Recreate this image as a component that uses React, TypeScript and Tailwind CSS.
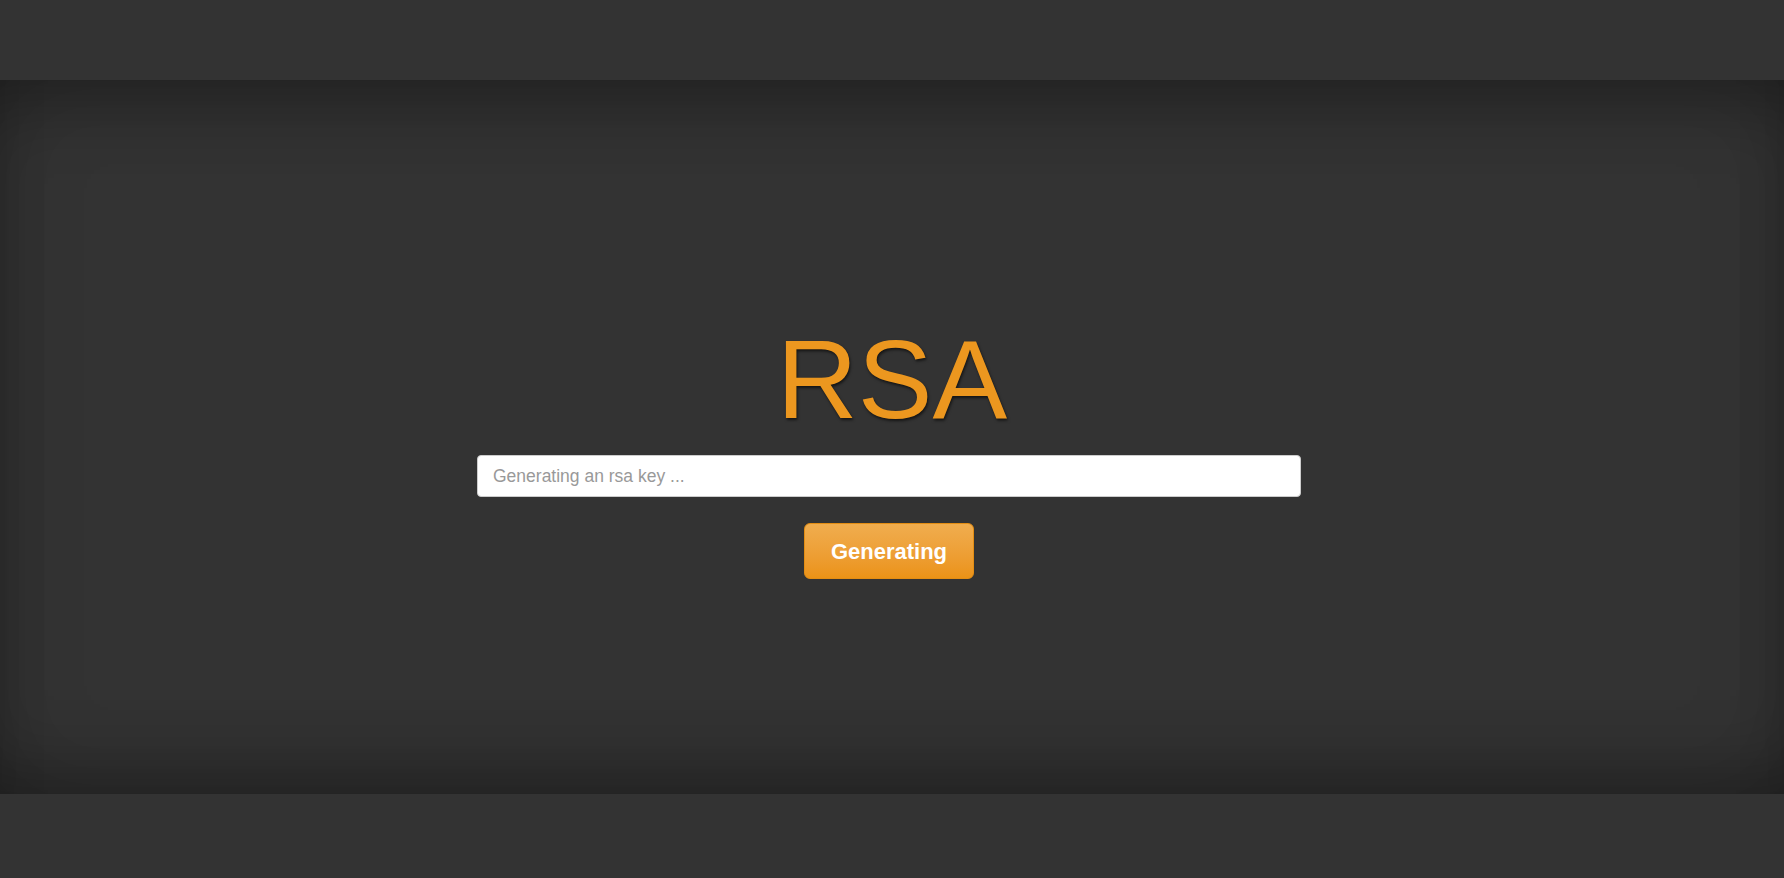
export default function App() {
  return (
    <div className="min-h-screen bg-[#333333] font-['Liberation_Sans',Arial,sans-serif]">
      <div className="h-[80px] bg-[#333333]"></div>
      <div className="flex h-[714px] flex-col items-center bg-[#333333] pt-[244px] shadow-[inset_0_50px_70px_-30px_rgba(0,0,0,0.3),inset_0_-50px_70px_-30px_rgba(0,0,0,0.3),inset_0_0_90px_rgba(0,0,0,0.15)]">
        <h1 className="text-[112px] leading-none text-[#ec971f] [text-shadow:1px_2px_3px_rgba(0,0,0,0.6)]">
          RSA
        </h1>
        <div className="mt-[19px] flex w-[830px] flex-col items-center pr-[6px]">
          <input
            type="text"
            placeholder="Generating an rsa key ..."
            disabled
            className="h-[42px] w-full rounded-[4px] border border-[#cccccc] bg-white px-[15px] text-[17.5px] text-[#555] placeholder:text-[#999] outline-none"
          />
          <button className="mt-[26px] h-[56px] w-[170px] rounded-[6px] border border-[#e38d13] bg-gradient-to-b from-[#f0ad4e] to-[#eb9316] text-[22px] font-bold text-white">
            Generating
          </button>
        </div>
      </div>
      <div className="h-[84px] bg-[#333333]"></div>
    </div>
  );
}
